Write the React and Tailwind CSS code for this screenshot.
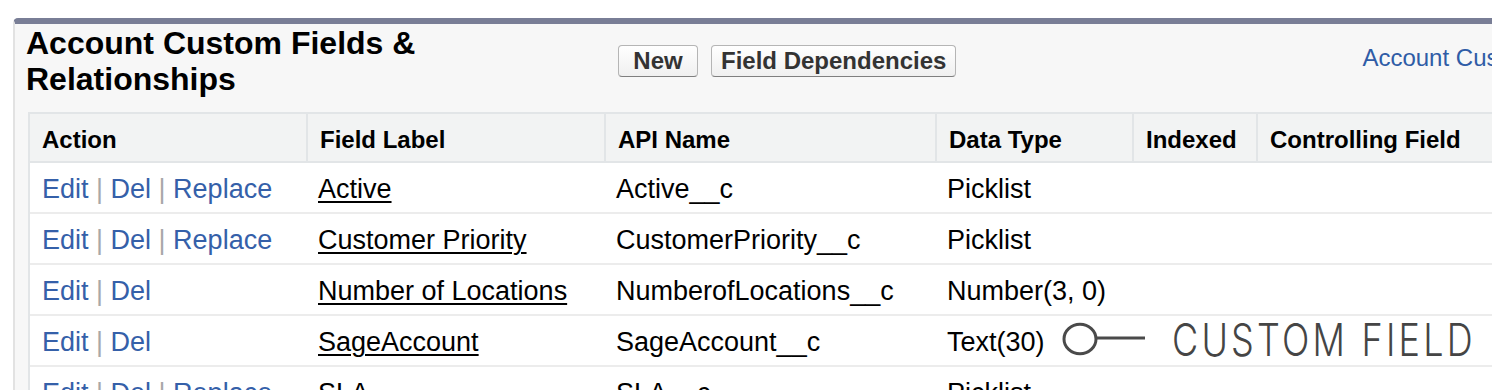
const rows = [
  { actions: ["Edit", "Del", "Replace"], label: "Active", api: "Active__c", type: "Picklist" },
  { actions: ["Edit", "Del", "Replace"], label: "Customer Priority", api: "CustomerPriority__c", type: "Picklist" },
  { actions: ["Edit", "Del"], label: "Number of Locations", api: "NumberofLocations__c", type: "Number(3, 0)" },
  { actions: ["Edit", "Del"], label: "SageAccount", api: "SageAccount__c", type: "Text(30)", note: true },
  { actions: ["Edit", "Del", "Replace"], label: "SLA", api: "SLA__c", type: "Picklist" },
];

const columns = [
  { name: "Action", width: "w-[276px]", first: true },
  { name: "Field Label", width: "w-[298px]" },
  { name: "API Name", width: "w-[331px]" },
  { name: "Data Type", width: "w-[197px]" },
  { name: "Indexed", width: "w-[124px]" },
  { name: "Controlling Field", width: "w-[320px]" },
];

function Button({ children, className = "" }) {
  return (
    <button
      className={
        "h-[32px] shrink-0 whitespace-nowrap rounded-[4px] border border-[#b5b5b5] border-b-[#7f7f7f] bg-gradient-to-b from-white to-[#f0f0f0] text-[24px] leading-[28px] font-bold text-[#333] " +
        className
      }
    >
      {children}
    </button>
  );
}

function CustomFieldNote() {
  return (
    <div className="absolute left-[1032px] top-[1px] flex items-center">
      <svg width="86" height="36" viewBox="0 0 86 36">
        <ellipse cx="18" cy="17" rx="16" ry="14.8" fill="none" stroke="#4a4a4a" strokeWidth="3" />
        <line x1="34" y1="16" x2="83" y2="16" stroke="#4a4a4a" strokeWidth="3" />
      </svg>
      <span className="ml-[24px] inline-block origin-left scale-x-[0.8] font-['Inter'] text-[45px] font-light leading-none tracking-[4px] text-[#454545] whitespace-nowrap">
        CUSTOM FIELD
      </span>
    </div>
  );
}

export default function App() {
  return (
    <div className="w-[1492px] h-[390px] overflow-hidden bg-white font-['Liberation_Sans',Arial,sans-serif]">
      <div className="ml-[13px] mt-[18px] w-[1600px] rounded-tl-[5px] border-t-[6px] border-l-2 border-t-[#797e96] border-l-[#e2e2e2] bg-[#f7f7f7] pb-[40px]">
        <div className="flex">
          <div className="w-[603px] shrink-0 pl-[11px] pt-[1px]">
            <h2 className="max-w-[420px] text-[32px] leading-[36px] font-bold text-black">
              Account Custom Fields &amp; Relationships
            </h2>
          </div>
          <div className="flex shrink-0 gap-[13px] pt-[21px]">
            <Button className="w-[80px]">New</Button>
            <Button className="px-[9px]">Field Dependencies</Button>
          </div>
          <a className="ml-[406px] shrink-0 pt-[20px] text-[24px] leading-[28px] text-[#2f5ca6] whitespace-nowrap">
            Account Custom Fields Help
          </a>
        </div>

        <div className="ml-[13px] mt-[15px] border-t-2 border-l-2 border-[#e2e5e7] bg-white">
          <div className="flex border-b-2 border-[#e2e5e7] bg-[#f2f3f3]">
            {columns.map((c) => (
              <div
                key={c.name}
                className={
                  c.width +
                  " h-[47px] shrink-0 pl-[12px] pt-[12px] text-[24px] leading-[28px] font-bold text-black " +
                  (c.first ? "" : "border-l-2 border-[#e2e5e7]")
                }
              >
                {c.name}
              </div>
            ))}
          </div>

          {rows.map((r) => (
            <div key={r.label} className="relative flex border-b-2 border-[#ececec] text-[27px] leading-[30px] text-black">
              <div className="w-[276px] shrink-0 pl-[12px] pt-[11px] pb-[8px] whitespace-nowrap">
                {r.actions.map((a, i) => (
                  <span key={a}>
                    {i > 0 && <span className="text-[#a8a8a8]"> | </span>}
                    <a className="text-[#3560a9]">{a}</a>
                  </span>
                ))}
              </div>
              <div className="w-[298px] shrink-0 pl-[12px] pt-[11px] pb-[8px] whitespace-nowrap">
                <a className="underline decoration-[2px] underline-offset-[3px]">{r.label}</a>
              </div>
              <div className="w-[331px] shrink-0 pl-[12px] pt-[11px] pb-[8px] whitespace-nowrap">{r.api}</div>
              <div className="w-[197px] shrink-0 pl-[12px] pt-[11px] pb-[8px] whitespace-nowrap">{r.type}</div>
              <div className="w-[124px] shrink-0" />
              <div className="w-[320px] shrink-0" />
              {r.note && <CustomFieldNote />}
            </div>
          ))}
        </div>
      </div>
    </div>
  );
}
